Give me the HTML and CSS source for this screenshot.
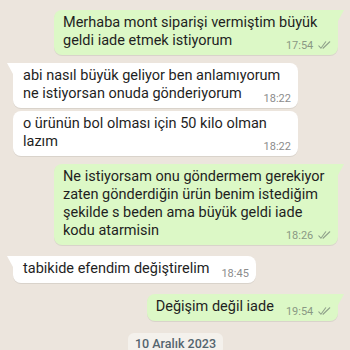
FILE: index.html
```html
<!DOCTYPE html>
<html lang="tr">

<head>
    <meta charset="UTF-8">
    <meta name="viewport" content="width=device-width, initial-scale=1.0">
    <title>Sohbet</title>
    <link rel="stylesheet" href="styles.css">
</head>

<body>

    <div class="chat">
        <div class="msg out tail">
            <div class="bubble">
                <span class="text">Merhaba mont siparişi vermiştim büyük geldi iade etmek istiyorum</span>
                <span class="meta">17:54 <svg class="ticks" viewBox="0 0 16 11"><path d="M1 6.5l2.6 3L9.5 1.5M6.2 9.5L14.5 1.5" /></svg></span>
            </div>
        </div>

        <div class="msg in tail">
            <div class="bubble">
                <span class="text">abi nasıl büyük geliyor ben anlamıyorum ne istiyorsan onuda gönderiyorum</span>
                <span class="meta">18:22</span>
            </div>
        </div>

        <div class="msg in next">
            <div class="bubble">
                <span class="text">o ürünün bol olması için 50 kilo olman lazım</span>
                <span class="meta">18:22</span>
            </div>
        </div>

        <div class="msg out tail">
            <div class="bubble">
                <span class="text">Ne istiyorsam onu göndermem gerekiyor zaten gönderdiğin ürün benim istediğim şekilde s beden ama büyük geldi iade kodu atarmisin</span>
                <span class="meta">18:26 <svg class="ticks" viewBox="0 0 16 11"><path d="M1 6.5l2.6 3L9.5 1.5M6.2 9.5L14.5 1.5" /></svg></span>
            </div>
        </div>

        <div class="msg in tail gap">
            <div class="bubble">
                <span class="text">tabikide efendim değiştirelim</span>
                <span class="meta">18:45</span>
            </div>
        </div>

        <div class="msg out tail gap">
            <div class="bubble">
                <span class="text">Değişim değil iade</span>
                <span class="meta">19:54 <svg class="ticks" viewBox="0 0 16 11"><path d="M1 6.5l2.6 3L9.5 1.5M6.2 9.5L14.5 1.5" /></svg></span>
            </div>
        </div>

        <div class="date-row">
            <span class="date">10 Aralık 2023</span>
        </div>
    </div>

</body>

</html>
```

FILE: styles.css
```css
body {
    margin: 0;
    background-color: #ece5dd;
    font-family: 'Roboto', 'Noto Sans', sans-serif;
    color: #1f1f1f;
}

.chat {
    display: flex;
    flex-direction: column;
    padding: 10px 12px 0 13px;
}

.msg {
    display: flex;
    margin-top: 8px;
}

.msg:first-child {
    margin-top: 0;
}

.msg.next {
    margin-top: 3px;
}

.msg.gap {
    margin-top: 11px;
}

.msg.out {
    justify-content: flex-end;
}

.bubble {
    position: relative;
    max-width: 268px;
    padding: 4px 7px 5px 10px;
    border-radius: 8px;
    font-size: 14.5px;
    line-height: 18px;
    box-shadow: 0 1px 0.5px rgba(0, 0, 0, 0.08);
}

.msg.out .bubble {
    background-color: #dcf8c6;
    padding-left: 9px;
}

.msg.in .bubble {
    background-color: #fff;
}

.msg.tail.out .bubble {
    border-top-right-radius: 0;
}

.msg.tail.in .bubble {
    border-top-left-radius: 0;
}

.msg.tail.out .bubble::after,
.msg.tail.in .bubble::before {
    content: '';
    position: absolute;
    top: 0;
    width: 0;
    height: 0;
    border-top: 11px solid transparent;
}

.msg.tail.out .bubble::after {
    right: -6px;
    border-top-color: #dcf8c6;
    border-right: 6px solid transparent;
}

.msg.tail.in .bubble::before {
    left: -6px;
    border-top-color: #fff;
    border-left: 6px solid transparent;
}

.meta {
    float: right;
    margin: 7px 0 -5px 12px;
    font-size: 11px;
    line-height: 14px;
    color: #8c8c8c;
    white-space: nowrap;
}

.msg.out .meta {
    color: #8a9884;
}

.ticks {
    width: 13px;
    height: 10px;
    margin-left: 2px;
    vertical-align: -1px;
}

.ticks path {
    fill: none;
    stroke: #8fa08a;
    stroke-width: 1.3;
    stroke-linecap: round;
    stroke-linejoin: round;
}

.date-row {
    display: flex;
    justify-content: center;
    margin-top: 12px;
}

.date {
    background-color: #f4f1ec;
    color: #54656f;
    font-size: 12.5px;
    font-weight: 500;
    line-height: 18px;
    padding: 2px 7px;
    border-radius: 6px;
}
```
